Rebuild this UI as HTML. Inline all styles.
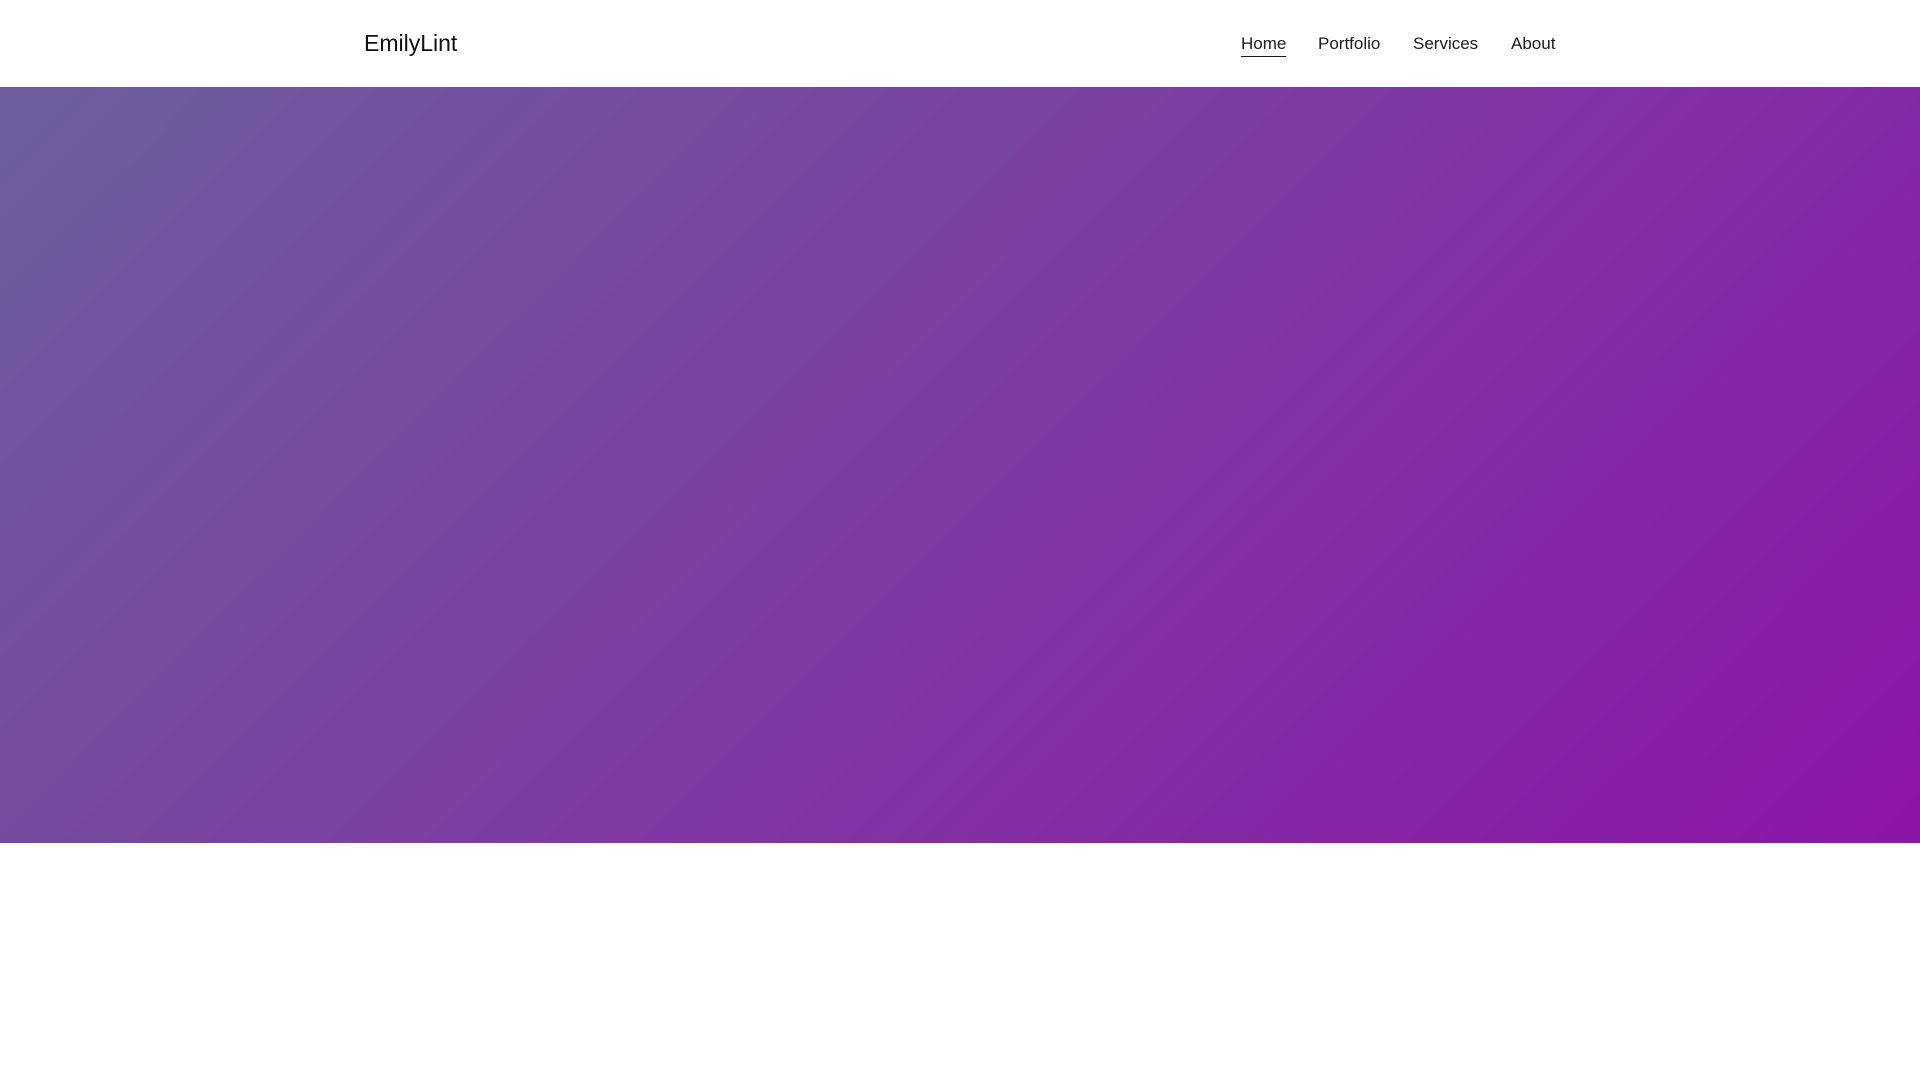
<!DOCTYPE html>
<html><head><meta charset="utf-8"><style>
html,body{margin:0;padding:0;background:#fff;width:1920px;height:1080px;overflow:hidden}
header{height:87px;position:relative;font-family:"Liberation Sans",sans-serif}
.logo{position:absolute;left:364px;top:28px;font-size:23px;color:#111;line-height:30px}
nav a{position:absolute;top:34px;font-size:17px;color:#1a1a1a;text-decoration:none;line-height:20px}
.home{border-bottom:1.5px solid #1a1a1a;padding-bottom:2px}
.hero{position:absolute;top:87px;left:0;width:1920px;height:756px;background:linear-gradient(135deg,#6c5f9c 0%,#7c3ea2 45%,#8c14a8 100%)}
</style></head><body>
<header><div class="logo">EmilyLint</div>
<nav><a class="home" style="left:1241px">Home</a><a style="left:1318px">Portfolio</a><a style="left:1413px">Services</a><a style="left:1511px">About</a></nav></header>
<div class="hero"></div>
</body></html>
